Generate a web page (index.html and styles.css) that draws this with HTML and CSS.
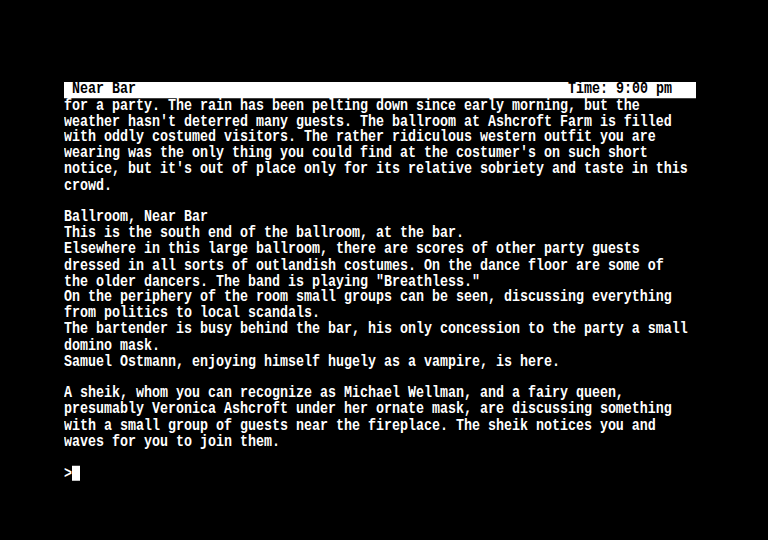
FILE: index.html
```html
<!DOCTYPE html>
<html>
<head>
<meta charset="utf-8">
<link rel="stylesheet" href="styles.css">
</head>
<body>
<div class="screen">
  <div class="status"><span>Near Bar</span><span>Time: 9:00 pm</span></div>
  <div class="text">for a party. The rain has been pelting down since early morning, but the
weather hasn't deterred many guests. The ballroom at Ashcroft Farm is filled
with oddly costumed visitors. The rather ridiculous western outfit you are
wearing was the only thing you could find at the costumer's on such short
notice, but it's out of place only for its relative sobriety and taste in this
crowd.

Ballroom, Near Bar
This is the south end of the ballroom, at the bar.
Elsewhere in this large ballroom, there are scores of other party guests
dressed in all sorts of outlandish costumes. On the dance floor are some of
the older dancers. The band is playing "Breathless."
On the periphery of the room small groups can be seen, discussing everything
from politics to local scandals.
The bartender is busy behind the bar, his only concession to the party a small
domino mask.
Samuel Ostmann, enjoying himself hugely as a vampire, is here.

A sheik, whom you can recognize as Michael Wellman, and a fairy queen,
presumably Veronica Ashcroft under her ornate mask, are discussing something
with a small group of guests near the fireplace. The sheik notices you and
waves for you to join them.

&gt;<span class="cursor"></span></div>
</div>
</body>
</html>
```
FILE: styles.css
```css
html, body {
  margin: 0;
  padding: 0;
  background: #000;
  width: 768px;
  height: 540px;
  overflow: hidden;
}
.screen {
  margin: 82px 0 0 64px;
  width: 632px;
  font-family: "Liberation Mono", monospace;
  font-weight: bold;
  font-size: 13.333px;
  line-height: 12.8px;
  color: #fff;
  transform: scaleY(1.25);
  transform-origin: 0 0;
}
.status {
  display: flex;
  justify-content: space-between;
  background: #fff;
  color: #000;
  height: 12.8px;
  padding: 0 24px 0 8px;
}
.status span {
  white-space: pre;
}
.text {
  white-space: pre;
}
.cursor {
  display: inline-block;
  width: 8px;
  height: 12px;
  background: #fff;
  vertical-align: -2px;
}
```
